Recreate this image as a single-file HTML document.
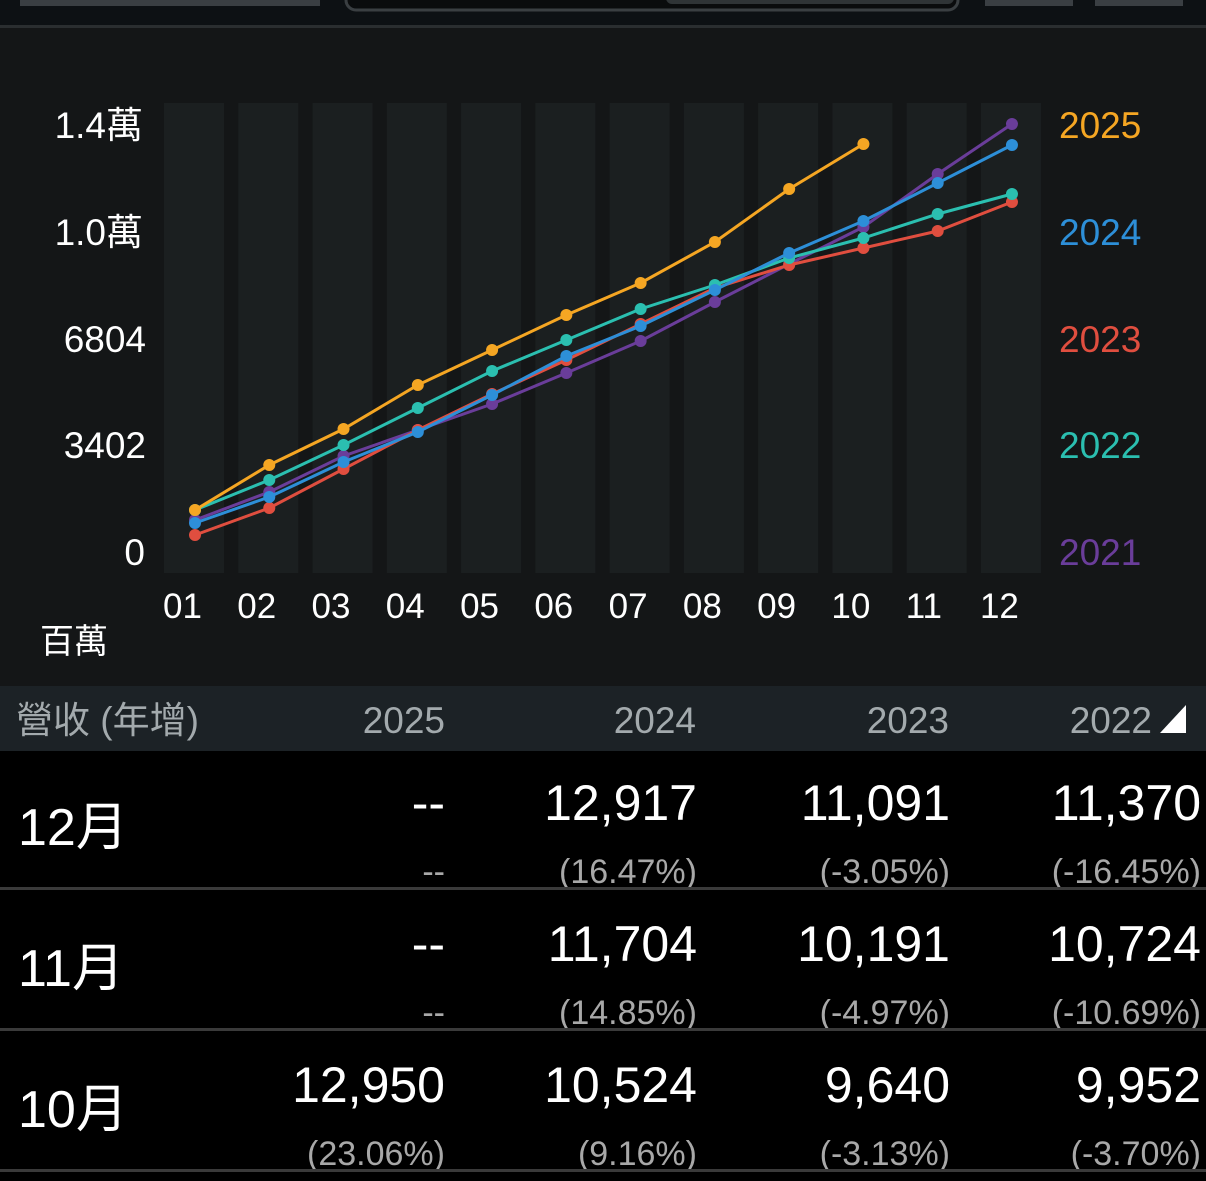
<!DOCTYPE html>
<html><head><meta charset="utf-8"><style>
html,body{margin:0;padding:0;background:#000;width:1206px;height:1181px;overflow:hidden}
svg text{font-family:"Liberation Sans","Noto Sans CJK TC",sans-serif}
</style></head><body>
<svg id="s" width="1206" height="1181" viewBox="0 0 1206 1181" xmlns="http://www.w3.org/2000/svg">
<rect x="0" y="0" width="1206" height="27" fill="#0d1114"/>
<rect x="20" y="0" width="300" height="6" fill="#3a3f43"/>
<rect x="346" y="-12" width="612" height="22" rx="10" fill="#0a0c0d" stroke="#3a3f42" stroke-width="3"/>
<rect x="666" y="-10" width="288" height="14" rx="6" fill="#2f3436"/>
<rect x="985" y="0" width="88" height="6" fill="#3a3f43"/>
<rect x="1095" y="0" width="88" height="6" fill="#3a3f43"/>
<rect x="0" y="25" width="1206" height="3" fill="#2a2e30"/>
<rect x="0" y="28" width="1206" height="658" fill="#141617"/>
<g id="cols"></g>
<g id="lines"></g>
<g fill="#fff" font-size="37" text-anchor="end">
<text x="143" y="138">1.4萬</text>
<text x="143" y="245">1.0萬</text>
<text x="146" y="352">6804</text>
<text x="146" y="458">3402</text>
<text x="145" y="565">0</text>
</g>
<g id="xl" fill="#fff" font-size="35"></g>
<text x="40" y="653" fill="#fff" font-size="34">百萬</text>
<g font-size="37">
<text x="1059" y="138" fill="#f5a623">2025</text>
<text x="1059" y="245" fill="#2d8fd8">2024</text>
<text x="1059" y="352" fill="#e04e3f">2023</text>
<text x="1059" y="458" fill="#2bbfb0">2022</text>
<text x="1059" y="565" fill="#6a3d9a">2021</text>
</g>
<rect x="0" y="686" width="1206" height="65" fill="#1c2226"/>
<g fill="#a3aaad" font-size="37">
<text x="16" y="733">營收 (年增)</text>
<g text-anchor="end">
<text x="445" y="733">2025</text>
<text x="696" y="733">2024</text>
<text x="949" y="733">2023</text>
<text x="1152" y="733">2022</text>
</g></g>
<polygon points="1160,733 1186,733 1186,705" fill="#fff"/>
<rect x="0" y="751" width="1206" height="430" fill="#000"/>
<g id="tbl"></g>
</svg>
<script>
const NS="http://www.w3.org/2000/svg";
function el(p,t,a,txt){const e=document.createElementNS(NS,t);for(const k in a)e.setAttribute(k,a[k]);if(txt!==undefined)e.textContent=txt;document.getElementById(p).appendChild(e);return e;}
const X=i=>195+i*74.27;
for(let i=0;i<12;i++){el('cols','rect',{x:164+i*74.27,y:103,width:60,height:470,fill:'#1b1f20'});
el('xl','text',{x:163+i*74.27,y:618},String(i+1).padStart(2,'0'));}
const data=[
['#6a3d9a',[520,492,456,430,404,373,341,302,264,227,174,124]],
['#e04e3f',[535,508,469,430,394,360,324,288,265,248,231,202]],
['#2bbfb0',[510,480,445,408,371,340,309,285,258,238,214,194]],
['#2d8fd8',[523,497,462,432,395,356,326,290,253,221,183,145]],
['#f5a623',[510,465,429,385,350,315,283,242,189,144]]];
for(const [c,ys] of data){el('lines','polyline',{points:ys.map((y,i)=>X(i)+','+y).join(' '),fill:'none',stroke:c,'stroke-width':3});
ys.forEach((y,i)=>el('lines','circle',{cx:X(i),cy:y,r:6,fill:c}));}
const rows=[['12月',['--','12,917','11,091','11,370'],['--','(16.47%)','(-3.05%)','(-16.45%)']],
['11月',['--','11,704','10,191','10,724'],['--','(14.85%)','(-4.97%)','(-10.69%)']],
['10月',['12,950','10,524','9,640','9,952'],['(23.06%)','(9.16%)','(-3.13%)','(-3.70%)']]];
const RX=[445,697,950,1201];
rows.forEach((r,k)=>{const b=751+k*141;
el('tbl','text',{x:18,y:b+94,fill:'#fff','font-size':52},r[0]);
r[1].forEach((v,j)=>el('tbl','text',{x:RX[j],y:b+69,fill:'#fff','font-size':50,'text-anchor':'end'},v));
r[2].forEach((v,j)=>el('tbl','text',{x:RX[j],y:b+132,fill:'#a8a8a8','font-size':34,'text-anchor':'end'},v));
el('tbl','rect',{x:0,y:b+136,width:1206,height:3,fill:'#3a3a3a'});});
</script>
</body></html>
